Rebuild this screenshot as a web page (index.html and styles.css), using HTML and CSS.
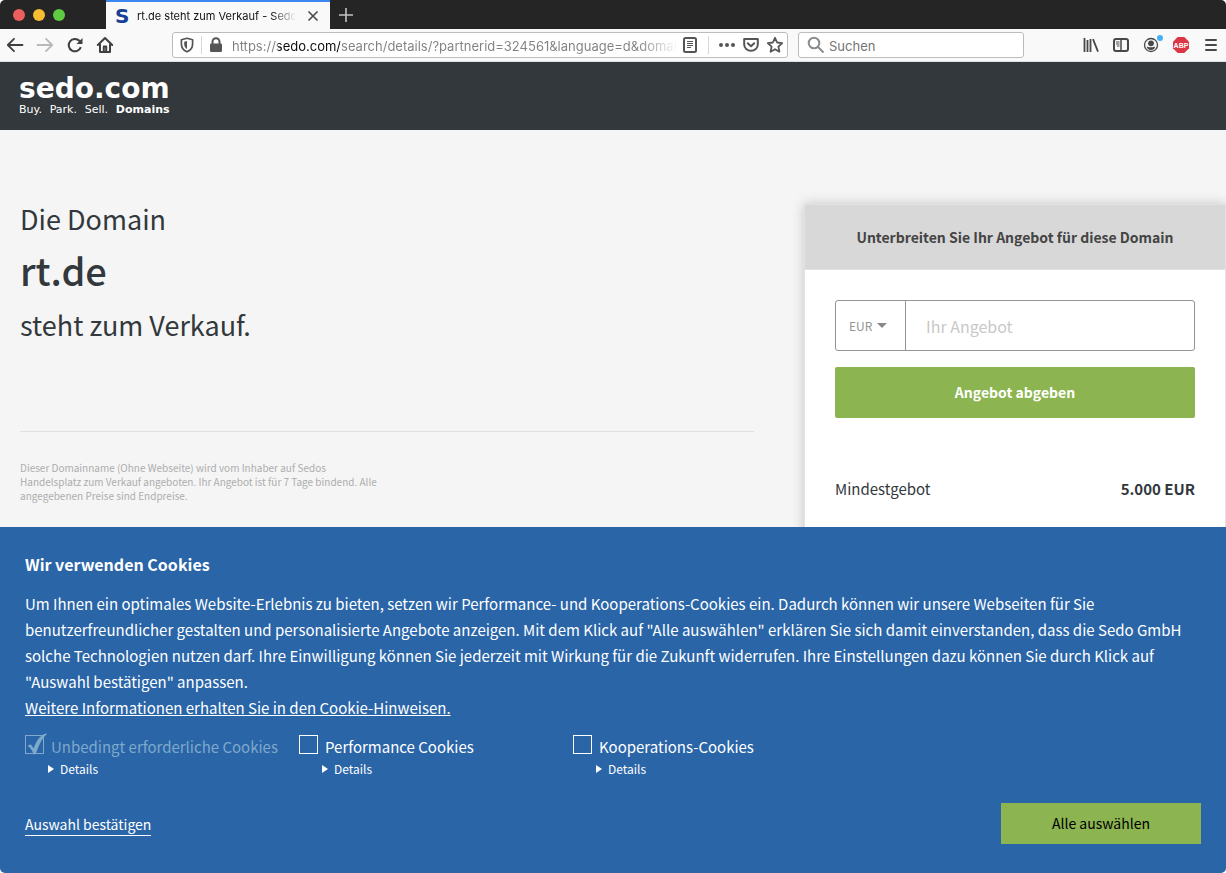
FILE: index.html
```html
<!DOCTYPE html>
<html lang="de">
<head>
  <meta charset="utf-8">
  <title>rt.de steht zum Verkauf - Sedo</title>
  <link rel="stylesheet" href="styles.css">
</head>
<body>
  <div class="window">

    <div class="tabs">
      <div class="lights">
        <span class="light red"></span>
        <span class="light yellow"></span>
        <span class="light green"></span>
      </div>
      <div class="tab">
        <span class="favicon">S</span>
        <span class="tab-title">rt.de steht zum Verkauf - Sedo GmbH</span>
        <button class="icon-btn" aria-label="Tab schließen">
          <svg width="12" height="12" viewBox="0 0 12 12" fill="none" stroke="#4a4a4a" stroke-width="1.6"><path d="M1.5 1.5l9 9M10.5 1.5l-9 9"/></svg>
        </button>
      </div>
      <button class="icon-btn new-tab" aria-label="Neuer Tab">
        <svg width="16" height="16" viewBox="0 0 16 16" fill="none" stroke="#c4c4c4" stroke-width="1.6"><path d="M8 1v14M1 8h14"/></svg>
      </button>
    </div>

    <div class="toolbar">
      <div class="nav">
        <button class="icon-btn" aria-label="Zurück">
          <svg width="18" height="18" viewBox="0 0 18 18" fill="none" stroke="#3f3f3f" stroke-width="1.8" stroke-linecap="round" stroke-linejoin="round"><path d="M16.5 9H2M8 2.8L1.8 9 8 15.2"/></svg>
        </button>
        <button class="icon-btn" aria-label="Vor">
          <svg width="18" height="18" viewBox="0 0 18 18" fill="none" stroke="#b9b9b9" stroke-width="1.8" stroke-linecap="round" stroke-linejoin="round"><path d="M1.5 9H16M10 2.8L16.2 9 10 15.2"/></svg>
        </button>
        <button class="icon-btn" aria-label="Neu laden">
          <svg width="18" height="18" viewBox="0 0 18 18" fill="none" stroke="#3f3f3f" stroke-width="2"><path d="M14.8 11.2A6.2 6.2 0 1 1 13.4 4.8L15 6.6"/><path d="M16.5 2v6h-6z" fill="#3f3f3f" stroke="none"/></svg>
        </button>
        <button class="icon-btn" aria-label="Startseite">
          <svg width="18" height="18" viewBox="0 0 18 18" fill="none" stroke="#3f3f3f" stroke-width="2" stroke-linecap="round" stroke-linejoin="round"><path d="M1.8 9L9 2l7.2 7"/><path d="M4 8.5V16h10V8.5"/><path d="M7.8 15.5V10.5h2.4v5"/></svg>
        </button>
      </div>

      <div class="urlbar">
        <svg width="14" height="16" viewBox="0 0 14 16" fill="none" stroke="#555" stroke-width="1.7" stroke-linejoin="round"><path d="M7 1.3L12.6 2.8V7C12.6 11 10.5 13.5 7 14.8 3.5 13.5 1.4 11 1.4 7V2.8z"/><path d="M7 4L4.2 4.7V7C4.2 9.5 5.3 11 7 12z" fill="#555" stroke="none"/></svg>
        <span class="sep"></span>
        <svg class="lock" width="14" height="16" viewBox="0 0 14 16"><path d="M3.5 7V4.800a3.500 3.500 0 0 1 7 0V7" fill="none" stroke="#555" stroke-width="2"/><rect x="1" y="6.5" width="12" height="8.5" rx="1.2" fill="#555"/></svg>
        <input class="url" type="text" aria-label="Adresse" value="https://sedo.com/search/details/?partnerid=324561&amp;language=d&amp;domain=rt.de">
        <button class="icon-btn" aria-label="Leseansicht">
          <svg width="16" height="16" viewBox="0 0 16 16" fill="none" stroke="#555"><rect x="2" y="1" width="12" height="14" rx="1.5" stroke-width="2"/><path d="M5 4.500h6M5 6.500h6M5 8.500h6M5 10.500h4"/></svg>
        </button>
        <span class="sep sep-wide"></span>
        <button class="icon-btn" aria-label="Seitenaktionen">
          <svg width="18" height="16" viewBox="0 0 18 16" fill="#555"><circle cx="3" cy="8" r="2"/><circle cx="9" cy="8" r="2"/><circle cx="15" cy="8" r="2"/></svg>
        </button>
        <button class="icon-btn" aria-label="Pocket">
          <svg width="18" height="16" viewBox="0 0 18 16" fill="none" stroke="#555" stroke-width="2" stroke-linecap="round" stroke-linejoin="round"><path d="M2.2 2h13.6v5.5a6.8 6.3 0 0 1-13.6 0z"/><path d="M5.8 6.3L9 9.3l3.2-3"/></svg>
        </button>
        <button class="icon-btn" aria-label="Lesezeichen">
          <svg width="18" height="18" viewBox="0 0 18 18" fill="none" stroke="#555" stroke-width="1.8" stroke-linejoin="round"><path d="M9 1.800l2.100 4.700 5.100.6-3.800 3.500 1 5.100L9 13.200l-4.400 2.500 1-5.100L1.800 7.100l5.100-.6z"/></svg>
        </button>
      </div>

      <div class="searchbar">
        <svg width="18" height="18" viewBox="0 0 18 18" fill="none" stroke="#8b8b8b" stroke-width="2"><circle cx="7" cy="7" r="5.3"/><path d="M11 11l5.5 5.5"/></svg>
        <input type="search" placeholder="Suchen" aria-label="Suchen">
      </div>

      <div class="tools">
        <button class="icon-btn" aria-label="Bibliothek">
          <svg width="16" height="16" viewBox="0 0 16 16" fill="none" stroke="#484848" stroke-width="1.8"><path d="M1.5 1v14M4.500 3v12M7.500 2v13M10 2.200L15 14.700"/></svg>
        </button>
        <button class="icon-btn" aria-label="Seitenleiste">
          <svg width="16" height="16" viewBox="0 0 16 16" fill="none" stroke="#484848"><rect x="1" y="2" width="14" height="12" rx="2" stroke-width="2"/><path d="M8 2v12" stroke-width="1.5"/><path d="M3 5h3.500M3 7h3.500M4 9h2.500"/></svg>
        </button>
        <button class="icon-btn account" aria-label="Konto">
          <svg width="16" height="16" viewBox="0 0 16 16"><circle cx="8" cy="8" r="6.5" fill="none" stroke="#484848" stroke-width="1.3"/><circle cx="8" cy="6.3" r="2.9" fill="#484848"/><path d="M3.8 9.5c1.2 1 7.2 1 8.4 0-.3 2.300-2 3.600-4.200 3.600s-3.900-1.300-4.200-3.600z" fill="#484848"/></svg>
          <span class="dot"></span>
        </button>
        <button class="icon-btn abp">
          <svg width="16" height="16" viewBox="0 0 16 16" aria-hidden="true"><path d="M4.7 0h6.6L16 4.7v6.6L11.3 16H4.7L0 11.300V4.700z" fill="#dc3545"/><text x="8" y="10.5" text-anchor="middle" class="abp-text">ABP</text></svg>
        </button>
        <button class="icon-btn" aria-label="Menü">
          <svg width="16" height="16" viewBox="0 0 16 16" stroke="#484848" stroke-width="2" stroke-linecap="round"><path d="M3 3h10M3 8h10M3 13h10"/></svg>
        </button>
      </div>
    </div>

    <div class="page">
      <header class="header">
        <a class="logo" href="#">
          <span class="logo-name">sedo.com</span>
          <span class="logo-claim"><span>Buy.</span><span>Park.</span><span>Sell.</span><b>Domains</b></span>
        </a>
      </header>

      <main class="content">
        <section class="intro">
          <h1>Die Domain <strong>rt.de</strong> steht zum Verkauf.</h1>
          <p class="legal">Dieser Domainname (Ohne Webseite) wird vom Inhaber auf Sedos Handelsplatz zum Verkauf angeboten. Ihr Angebot ist für 7 Tage bindend. Alle angegebenen Preise sind Endpreise.</p>
        </section>

        <form class="offer">
          <h2>Unterbreiten Sie Ihr Angebot für diese Domain</h2>
          <div class="offer-body">
            <div class="bid">
              <div class="currency">
                <select aria-label="Währung">
                  <option>EUR</option>
                  <option>USD</option>
                  <option>GBP</option>
                </select>
              </div>
              <input type="text" placeholder="Ihr Angebot" aria-label="Ihr Angebot">
            </div>
            <button class="submit" type="button">Angebot abgeben</button>
            <div class="minimum">
              <span>Mindestgebot</span>
              <b>5.000 EUR</b>
            </div>
          </div>
        </form>
      </main>

      <section class="cookies">
        <h3>Wir verwenden Cookies</h3>
        <p>Um Ihnen ein optimales Website-Erlebnis zu bieten, setzen wir Performance- und Kooperations-Cookies ein. Dadurch können wir unsere Webseiten für Sie benutzerfreundlicher gestalten und personalisierte Angebote anzeigen. Mit dem Klick auf "Alle auswählen" erklären Sie sich damit einverstanden, dass die Sedo GmbH solche Technologien nutzen darf. Ihre Einwilligung können Sie jederzeit mit Wirkung für die Zukunft widerrufen. Ihre Einstellungen dazu können Sie durch Klick auf "Auswahl bestätigen" anpassen.<br>
        <a href="#">Weitere Informationen erhalten Sie in den Cookie-Hinweisen.</a></p>

        <div class="choices">
          <div class="choice">
            <label class="required">
              <input type="checkbox" checked disabled>
              <svg class="tick" width="20" height="22" viewBox="0 0 20 22"><path d="M1 12.500c2-2 3.500-1.500 5.500 3C9 9 12.500 2 19 .5c1 0 .8.500.2 1.200C14.500 6 11.500 13 9 20.500c-.8 1.200-2 1.200-2.700 0C5 17.500 3.500 14.500 1 13.300z" fill="#7ea9cc"/></svg>
              Unbedingt erforderliche Cookies
            </label>
            <details><summary>Details</summary></details>
          </div>
          <div class="choice">
            <label><input type="checkbox"> Performance Cookies</label>
            <details><summary>Details</summary></details>
          </div>
          <div class="choice">
            <label><input type="checkbox"> Kooperations-Cookies</label>
            <details><summary>Details</summary></details>
          </div>
        </div>

        <div class="actions">
          <a href="#">Auswahl bestätigen</a>
          <button type="button">Alle auswählen</button>
        </div>
      </section>
    </div>

  </div>
</body>
</html>
```
FILE: styles.css
```css
* {
  box-sizing: border-box;
}

body {
  margin: 0;
  background: #fff;
  font-family: "Noto Sans CJK SC", sans-serif;
  color: #32383c;
}

button,
input,
select {
  font-family: inherit;
  margin: 0;
  outline: none;
}

svg {
  display: block;
  flex: none;
}

.window {
  display: flex;
  flex-direction: column;
  height: 100vh;
  overflow: hidden;
  border-radius: 5px;
  background: #f5f5f5;
}

/* browser */
.icon-btn {
  display: flex;
  align-items: center;
  justify-content: center;
  padding: 0;
  border: 0;
  background: none;
}

.tabs {
  display: flex;
  flex: none;
  height: 29px;
  background: #252525;
}

.lights {
  display: flex;
  align-items: center;
  gap: 8px;
  width: 106px;
  padding-left: 13px;
}

.light {
  width: 12px;
  height: 12px;
  border-radius: 50%;
}

.red {
  background: #ec5f5f;
}

.yellow {
  background: #f6be30;
}

.green {
  background: #5fcb43;
}

.tab {
  display: flex;
  align-items: center;
  width: 224px;
  padding: 0 11px 0 9px;
  border-top: 2px solid #3b87f0;
  background: #f9f9fa;
}

.favicon {
  width: 16px;
  margin-right: 6px;
  font: bold 20px/20px "DejaVu Sans", sans-serif;
  color: #173f95;
}

.tab-title {
  flex: 1;
  overflow: hidden;
  margin-right: 7px;
  font: 11px/20px Inter, sans-serif;
  color: #111;
  white-space: nowrap;
  -webkit-mask-image: linear-gradient(to left, transparent 4px, #000 28px);
}

.new-tab {
  width: 32px;
}

.toolbar {
  display: flex;
  flex: none;
  align-items: center;
  height: 33px;
  padding: 0 7px 0 6px;
  border-bottom: 1px solid #dde1e1;
  background: #f9f9fa;
}

.nav {
  display: flex;
  gap: 12px;
  width: 166px;
}

.urlbar,
.searchbar {
  display: flex;
  align-items: center;
  height: 26px;
  border: 1px solid #bcbcbc;
  border-radius: 3px;
  background: #fff;
}

.urlbar {
  flex: 604 1 0;
  min-width: 0;
  padding: 0 3px 0 7px;
}

.sep {
  width: 1px;
  height: 18px;
  margin: 0 7px;
  background: #d7d7db;
}

.sep-wide {
  margin: 0 9px 0 10px;
}

.lock {
  margin-right: 9px;
}

.url {
  flex: 1;
  min-width: 0;
  margin-right: 4px;
  padding: 2px 0 0;
  border: 0;
  font: 13px/20px Inter, sans-serif;
  color: transparent;
  /* host is dark, the rest is grey and fades out at the end */
  background: linear-gradient(90deg, #808080 46px, #0c0c0d 46px, #0c0c0d 108px, #808080 108px, #808080 calc(100% - 40px), transparent);
  -webkit-background-clip: text;
  background-clip: text;
}

.urlbar .icon-btn + .icon-btn {
  margin-left: 6px;
}

.searchbar {
  flex: 208 1 0;
  min-width: 0;
  margin-left: 10px;
  padding: 0 8px;
}

.searchbar input {
  flex: 1;
  min-width: 0;
  padding: 2px 4px 0;
  border: 0;
  background: none;
  font: 13px/20px Inter, sans-serif;
}

.searchbar input::placeholder {
  color: #757575;
}

.tools {
  display: flex;
  gap: 14px;
  margin-left: 59px;
}

.account {
  position: relative;
}

.dot {
  position: absolute;
  top: -2px;
  right: -4px;
  width: 6px;
  height: 6px;
  border-radius: 50%;
  background: #45b1f4;
}

.abp-text {
  font: bold 7px "Liberation Sans", sans-serif;
  fill: #fff;
}

/* page */
.page {
  position: relative;
  flex: 1;
  overflow: hidden;
}

.header {
  height: 68px;
  padding: 13px 19px;
  background: #32383c;
}

.logo {
  display: inline-block;
  color: #fff;
  text-decoration: none;
}

.logo-name {
  display: block;
  font: bold 28px/28px "DejaVu Sans", sans-serif;
}

.logo-claim {
  display: flex;
  justify-content: space-between;
  font: 11px/14px "DejaVu Sans", sans-serif;
}

.content {
  display: grid;
  grid-template-columns: 1fr 422px;
  gap: 50px;
  padding: 74px 0 0 20px;
}

h1 {
  margin: 0;
  padding-bottom: 91px;
  border-bottom: 1px solid #e0e0e0;
  font-size: 27px;
  font-weight: 400;
  line-height: 30px;
}

h1 strong {
  display: block;
  padding: 14px 0 18px;
  font-size: 38px;
  font-weight: 500;
  line-height: 44px;
}

.legal {
  max-width: 360px;
  margin: 29px 0 0;
  font-size: 10px;
  line-height: 14px;
  color: #adadad;
}

.offer {
  border: 1px solid #e2e2e2;
  background: #fff;
  box-shadow: 0 0 12px rgba(0, 0, 0, 0.2);
}

.offer h2 {
  margin: 0;
  padding: 20px;
  border-bottom: 1px solid #e2e2e2;
  background: #d8d8d8;
  font-size: 14px;
  line-height: 24px;
  text-align: center;
  color: #444;
}

.offer-body {
  padding: 30px 30px 120px;
}

.bid {
  display: flex;
  height: 51px;
  border: 1px solid #949494;
  border-radius: 3px;
}

.currency {
  display: flex;
  align-items: center;
  width: 70px;
  padding-left: 13px;
  border-right: 1px solid #949494;
}

.currency select {
  padding: 0;
  border: 0;
  background: none;
  font-size: 12px;
  color: #949494;
  appearance: none;
}

.currency::after {
  content: "";
  margin-left: 4px;
  border: 5px solid transparent;
  border-top-color: #888;
  border-bottom: 0;
}

.bid input {
  flex: 1;
  min-width: 0;
  padding: 0 20px;
  border: 0;
  background: none;
  font-size: 16px;
}

.bid input::placeholder {
  color: #c8c8c8;
}

.submit {
  display: block;
  width: 100%;
  height: 51px;
  margin: 16px 0 59px;
  padding: 0 0 2px;
  border: 0;
  border-radius: 2px;
  background: #8cb450;
  font-size: 14px;
  font-weight: 700;
  color: #fff;
}

.minimum {
  display: flex;
  justify-content: space-between;
  font-size: 15px;
  line-height: 24px;
}

/* cookie layer */
.cookies {
  position: absolute;
  right: 0;
  bottom: 0;
  left: 0;
  padding: 24px 25px 29px;
  background: #2a65a8;
  color: #fff;
}

.cookies h3 {
  margin: 0 0 14px;
  font-size: 16px;
  line-height: 26px;
}

.cookies p {
  margin: 0 0 14px;
  font-size: 15px;
  line-height: 26px;
}

.cookies a {
  color: #fff;
}

.choices {
  display: grid;
  grid-template-columns: repeat(3, 274px);
}

.choice label {
  position: relative;
  display: flex;
  align-items: center;
  font-size: 15px;
  line-height: 24px;
}

.choice input {
  flex: none;
  width: 19px;
  height: 19px;
  margin: 0 7px 5px 0;
  border: 1px solid #fff;
  appearance: none;
}

.choice .required {
  color: #7ea9cc;
}

.required input {
  border-color: #7ea9cc;
}

.tick {
  position: absolute;
  top: -2px;
  left: 2px;
}

.choice summary {
  display: flex;
  align-items: center;
  padding-left: 23px;
  font-size: 12px;
  line-height: 20px;
}

.choice summary::before {
  content: "";
  margin-right: 6px;
  border: 4px solid transparent;
  border-left: 6px solid #fff;
  border-right: 0;
}

.actions {
  display: flex;
  align-items: center;
  justify-content: space-between;
  margin-top: 24px;
}

.actions a {
  padding-top: 2px;
  border-bottom: 1px solid #fff;
  font-size: 14px;
  line-height: 22px;
  text-decoration: none;
}

.actions button {
  width: 200px;
  height: 41px;
  padding: 0 0 2px;
  border: 0;
  background: #8cb450;
  font-size: 14px;
  color: #000;
}
```
